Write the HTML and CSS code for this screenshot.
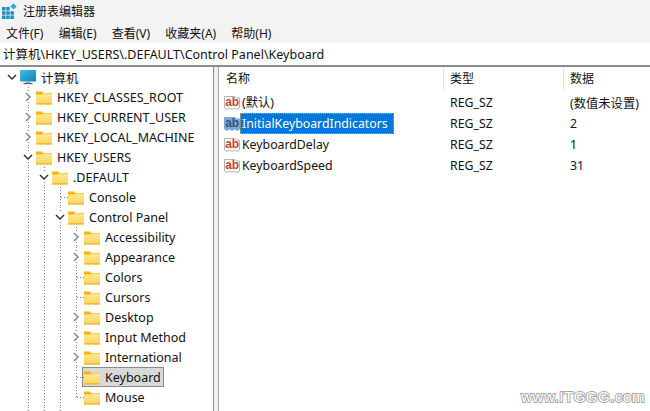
FILE: index.html
```html
<!DOCTYPE html>
<html lang="zh-CN">
<head>
<meta charset="utf-8">
<title>注册表编辑器</title>
<link rel="stylesheet" href="styles.css">
</head>
<body>
<svg class="defs" width="0" height="0" aria-hidden="true">
  <defs>
    <linearGradient id="fg" x1="0" y1="0" x2="0" y2="1"><stop offset="0" stop-color="#ffe896"/><stop offset="1" stop-color="#fdd45c"/></linearGradient>
    <linearGradient id="mg" x1="0" y1="0" x2="1" y2="1"><stop offset="0" stop-color="#3fc0e4"/><stop offset="1" stop-color="#0f7fb8"/></linearGradient>
    <symbol id="folder" viewBox="0 0 16 16">
      <path d="M0 2.500h6l1.500 1.500H16v2H0z" fill="#f5b50e"/>
      <path d="M0 5.500h6.500l1.500-1h8v10.500a.5.5 0 0 1-.5.5H.5a.5.5 0 0 1-.5-.5z" fill="url(#fg)"/>
      <path d="M0 14.200h16V15a.5.5 0 0 1-.5.5H.5A.5.5 0 0 1 0 15z" fill="#eeb52c"/>
    </symbol>
    <symbol id="paper" viewBox="0 0 16 16">
      <path d="M.5 1.500h10.500l1.500 1.500h3v10l-2.500 1.500-2.500-1.500-2.500 1.500-2.500-1.500-2.500 1.500-2.500-1.500z" fill="currentColor"/>
    </symbol>
  </defs>
</svg>

<header class="titlebar">
  <svg class="appicon" viewBox="0 0 16 16" width="16" height="16">
    <path d="M1 4h3.500v3.500H1zM5.200 4h3.500v3.500H5.200zM1 8.200h3.500v3.500H1zM5.200 8.200h3.500v3.500H5.200zM9.400 8.200h3.500v3.500H9.400zM1 12.400h3.500V16H1zM5.200 12.400h3.500V16H5.200zM9.400 12.400h3.500V16H9.400z" fill="#1b8fc4"/>
    <path d="M12.500 .2l3.200 3.200-3.200 3.200-3.200-3.200z" fill="#35a9dc"/>
  </svg>
  <span>注册表编辑器</span>
</header>

<nav class="menubar">
  <span>文件(F)</span><span>编辑(E)</span><span>查看(V)</span><span>收藏夹(A)</span><span>帮助(H)</span>
</nav>

<div class="address">计算机\HKEY_USERS\.DEFAULT\Control Panel\Keyboard</div>

<main class="panes">
  <section class="tree">
    <div class="row">
      <i class="cell"><svg class="chev" viewBox="0 0 10 10"><path d="M1 3l4 4 4-4"/></svg></i>
      <svg class="ico" viewBox="0 0 16 16"><rect x="0" y="1" width="16" height="11.500" rx="1" fill="url(#mg)"/><rect x="5.500" y="12.500" width="5" height="1.500" fill="#8fa9b5"/><rect x="3.500" y="14" width="9" height="1.200" fill="#4f6b7a"/></svg>
      <span class="label">计算机</span>
    </div>
    <div class="row">
      <i class="cell"></i>
      <i class="cell guide"><svg class="chev open" viewBox="0 0 10 10"><path d="M3 1l4 4-4 4"/></svg></i>
      <svg class="ico"><use href="#folder"/></svg><span class="label">HKEY_CLASSES_ROOT</span>
    </div>
    <div class="row">
      <i class="cell"></i>
      <i class="cell guide"><svg class="chev open" viewBox="0 0 10 10"><path d="M3 1l4 4-4 4"/></svg></i>
      <svg class="ico"><use href="#folder"/></svg><span class="label">HKEY_CURRENT_USER</span>
    </div>
    <div class="row">
      <i class="cell"></i>
      <i class="cell guide"><svg class="chev open" viewBox="0 0 10 10"><path d="M3 1l4 4-4 4"/></svg></i>
      <svg class="ico"><use href="#folder"/></svg><span class="label">HKEY_LOCAL_MACHINE</span>
    </div>
    <div class="row">
      <i class="cell"></i>
      <i class="cell guide"><svg class="chev" viewBox="0 0 10 10"><path d="M1 3l4 4 4-4"/></svg></i>
      <svg class="ico"><use href="#folder"/></svg><span class="label">HKEY_USERS</span>
    </div>
    <div class="row">
      <i class="cell"></i><i class="cell guide"></i>
      <i class="cell guide"><svg class="chev" viewBox="0 0 10 10"><path d="M1 3l4 4 4-4"/></svg></i>
      <svg class="ico"><use href="#folder"/></svg><span class="label">.DEFAULT</span>
    </div>
    <div class="row">
      <i class="cell"></i><i class="cell guide"></i><i class="cell guide"></i>
      <i class="cell guide stub"></i>
      <svg class="ico"><use href="#folder"/></svg><span class="label">Console</span>
    </div>
    <div class="row">
      <i class="cell"></i><i class="cell guide"></i><i class="cell guide"></i>
      <i class="cell guide"><svg class="chev" viewBox="0 0 10 10"><path d="M1 3l4 4 4-4"/></svg></i>
      <svg class="ico"><use href="#folder"/></svg><span class="label">Control Panel</span>
    </div>
    <div class="row">
      <i class="cell"></i><i class="cell guide"></i><i class="cell guide"></i><i class="cell guide"></i>
      <i class="cell guide"><svg class="chev open" viewBox="0 0 10 10"><path d="M3 1l4 4-4 4"/></svg></i>
      <svg class="ico"><use href="#folder"/></svg><span class="label">Accessibility</span>
    </div>
    <div class="row">
      <i class="cell"></i><i class="cell guide"></i><i class="cell guide"></i><i class="cell guide"></i>
      <i class="cell guide"><svg class="chev open" viewBox="0 0 10 10"><path d="M3 1l4 4-4 4"/></svg></i>
      <svg class="ico"><use href="#folder"/></svg><span class="label">Appearance</span>
    </div>
    <div class="row">
      <i class="cell"></i><i class="cell guide"></i><i class="cell guide"></i><i class="cell guide"></i>
      <i class="cell guide stub"></i>
      <svg class="ico"><use href="#folder"/></svg><span class="label">Colors</span>
    </div>
    <div class="row">
      <i class="cell"></i><i class="cell guide"></i><i class="cell guide"></i><i class="cell guide"></i>
      <i class="cell guide stub"></i>
      <svg class="ico"><use href="#folder"/></svg><span class="label">Cursors</span>
    </div>
    <div class="row">
      <i class="cell"></i><i class="cell guide"></i><i class="cell guide"></i><i class="cell guide"></i>
      <i class="cell guide"><svg class="chev open" viewBox="0 0 10 10"><path d="M3 1l4 4-4 4"/></svg></i>
      <svg class="ico"><use href="#folder"/></svg><span class="label">Desktop</span>
    </div>
    <div class="row">
      <i class="cell"></i><i class="cell guide"></i><i class="cell guide"></i><i class="cell guide"></i>
      <i class="cell guide"><svg class="chev open" viewBox="0 0 10 10"><path d="M3 1l4 4-4 4"/></svg></i>
      <svg class="ico"><use href="#folder"/></svg><span class="label">Input Method</span>
    </div>
    <div class="row">
      <i class="cell"></i><i class="cell guide"></i><i class="cell guide"></i><i class="cell guide"></i>
      <i class="cell guide"><svg class="chev open" viewBox="0 0 10 10"><path d="M3 1l4 4-4 4"/></svg></i>
      <svg class="ico"><use href="#folder"/></svg><span class="label">International</span>
    </div>
    <div class="row">
      <i class="cell"></i><i class="cell guide"></i><i class="cell guide"></i><i class="cell guide"></i>
      <i class="cell guide stub"></i>
      <span class="selected"><svg class="ico"><use href="#folder"/></svg><span class="label">Keyboard</span></span>
    </div>
    <div class="row">
      <i class="cell"></i><i class="cell guide"></i><i class="cell guide"></i><i class="cell guide"></i>
      <i class="cell guide stub last"></i>
      <svg class="ico"><use href="#folder"/></svg><span class="label">Mouse</span>
    </div>
    <div class="row">
      <i class="cell"></i><i class="cell guide"></i><i class="cell guide"></i><i class="cell guide"></i>
    </div>
  </section>

  <div class="splitter"></div>

  <section class="list">
    <div class="grid head">
      <span class="h">名称</span><span class="h sep">类型</span><span class="h sep">数据</span>
    </div>
    <div class="grid item">
      <span class="name"><span class="abicon"><svg><use href="#paper"/></svg><b>ab</b></span><span class="nm">(默认)</span></span><span class="v">REG_SZ</span><span class="v">(数值未设置)</span>
    </div>
    <div class="grid item">
      <span class="name"><span class="abicon sel"><svg><use href="#paper"/></svg><b>ab</b></span><span class="nm focus">InitialKeyboardIndicators</span></span><span class="v">REG_SZ</span><span class="v">2</span>
    </div>
    <div class="grid item">
      <span class="name"><span class="abicon"><svg><use href="#paper"/></svg><b>ab</b></span><span class="nm">KeyboardDelay</span></span><span class="v">REG_SZ</span><span class="v">1</span>
    </div>
    <div class="grid item">
      <span class="name"><span class="abicon"><svg><use href="#paper"/></svg><b>ab</b></span><span class="nm">KeyboardSpeed</span></span><span class="v">REG_SZ</span><span class="v">31</span>
    </div>
  </section>
</main>

<div class="watermark">www.ITGGG.com</div>
</body>
</html>
```

FILE: styles.css
```css
* { box-sizing: border-box; }
html, body { margin: 0; height: 100%; }
body {
  width: 650px;
  height: 411px;
  overflow: hidden;
  position: relative;
  background: #fff;
  color: #111;
  font-family: "Noto Sans", "Noto Sans CJK SC", sans-serif;
  font-size: 12.5px;
  display: flex;
  flex-direction: column;
}
.defs { position: absolute; }

.titlebar {
  height: 22px;
  background: #f3f3f3;
  display: flex;
  align-items: center;
  gap: 6px;
  padding-left: 1px;
  font-size: 12px;
  flex: none;
}
.menubar {
  height: 21px;
  background: #f3f3f3;
  display: flex;
  align-items: center;
  gap: 15.2px;
  padding-left: 6px;
  font-size: 12px;
  flex: none;
}
.address {
  height: 22px;
  flex: none;
  padding-left: 3px;
  line-height: 23px;
  background: #fff;
  white-space: nowrap;
}
.panes {
  flex: 1;
  min-height: 0;
  display: flex;
  border-top: 2px solid #8c8c8c;
}

.tree {
  width: 213px;
  flex: none;
  overflow: hidden;
  padding-left: 4px;
}
.splitter {
  width: 6px;
  flex: none;
  background: #f0f0f0;
  border-left: 1px solid #8c8c8c;
  border-right: 1px solid #a8a8a8;
}
.row {
  height: 20px;
  display: flex;
  align-items: center;
}
.cell {
  width: 16px;
  height: 20px;
  flex: none;
  display: flex;
  align-items: center;
  justify-content: center;
  position: relative;
}
.guide {
  background: repeating-linear-gradient(to bottom, #7a7a7a 0 1px, transparent 1px 3px) 8px 0 / 1px 100% no-repeat;
}
.stub::after {
  content: "";
  position: absolute;
  left: 9px;
  top: 10px;
  width: 7px;
  height: 1px;
  background: repeating-linear-gradient(to right, #7a7a7a 0 1px, transparent 1px 3px);
}
.last { background-size: 1px 11px; }
.chev {
  width: 10px;
  height: 10px;
  background: #fff;
  fill: none;
  stroke: #333;
  stroke-width: 1.500;
}
.chev.open { stroke: #8f8f8f; stroke-width: 1.700; }
.ico {
  width: 16px;
  height: 16px;
  flex: none;
}
.label {
  margin-left: 5px;
  white-space: nowrap;
}
.selected {
  display: flex;
  align-items: center;
  height: 20px;
  margin-left: -2px;
  padding: 0 2px;
  background: #d9d9d9;
  border: 1px solid #8a8a8a;
}
.selected .ico { margin-left: -1px; }

.list {
  flex: 1;
  min-width: 0;
  font-size: 12.3px;
}
.grid {
  display: grid;
  grid-template-columns: 224px 120px 1fr;
}
.head { height: 25px; align-items: stretch; }
.h {
  padding-left: 7px;
  line-height: 24px;
  font-size: 12px;
}
.sep { border-left: 1px solid #e5e5e5; height: 24px; padding-left: 6px; }
.item { height: 21px; align-items: center; }
.v { padding-left: 7px; white-space: nowrap; }
.name { display: flex; align-items: center; padding-left: 5px; height: 21px; }
.abicon {
  width: 16px;
  height: 16px;
  flex: none;
  display: grid;
  color: #fff;
  stroke: #b4b4b4;
}
.abicon svg, .abicon b { grid-area: 1 / 1; width: 16px; height: 16px; }
.abicon b {
  color: #c8432f;
  font: bold 12px/14px "Liberation Sans", sans-serif;
  letter-spacing: -.3px;
  text-align: center;
}
.abicon.sel { color: #78a9dc; stroke: #78a9dc; }
.abicon.sel b { color: #44506e; }
.nm {
  padding: 0 2px;
  line-height: 19px;
  white-space: nowrap;
}
.focus {
  height: 21px;
  background: #0078d7;
  color: #fff;
  border: 1px dotted #f0a030;
  padding: 0 5px 0 1px;
}

.watermark {
  position: absolute;
  right: 5px;
  bottom: 6px;
  font: 15px "Liberation Sans", sans-serif;
  color: #fff;
  -webkit-text-stroke: 2px #a8a8a8;
  paint-order: stroke fill;
  letter-spacing: .55px;
}
```
